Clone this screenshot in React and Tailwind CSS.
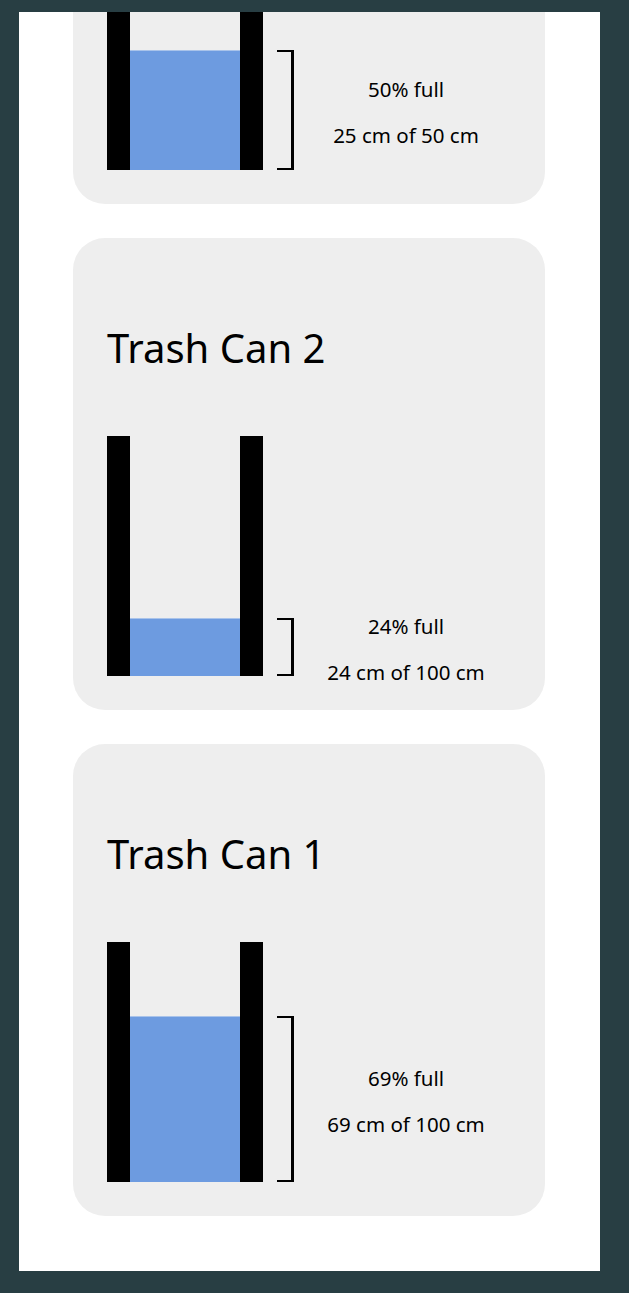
import React from 'react';

const cans = [
  { name: 'Trash Can 3', level: 25, depth: 50 },
  { name: 'Trash Can 2', level: 24, depth: 100 },
  { name: 'Trash Can 1', level: 69, depth: 100 },
];

const CAN_HEIGHT = 240;

const TrashCard = ({ can }) => {
  const pct = Math.round((can.level / can.depth) * 100);
  const fill = (CAN_HEIGHT * pct) / 100;

  return (
    <div className="bg-[#eeeeee] rounded-[32px] w-[472px] h-[472px] px-[34px] pt-[34px] flex flex-col">
      <h2 className="mt-[52px] text-[40px] leading-[48px] text-black font-normal">{can.name}</h2>
      <div className="mt-[64px] flex flex-row items-end">
        {/* the can itself */}
        <div className="flex flex-row h-[240px] w-[156px]">
          <div className="w-[23px] bg-black" />
          <div className="flex-1 flex flex-col justify-end">
            <div className="bg-[#6d9be0] border-t border-[#a9c3ea]" style={{ height: fill }} />
          </div>
          <div className="w-[23px] bg-black" />
        </div>
        {/* bracket + readout */}
        <div className="flex flex-row flex-1" style={{ height: fill }}>
          <div className="ml-[14px] w-[17px] border-y-2 border-r-[3px] border-black" />
          <div className="flex-1 pl-[7px] pt-[4px] flex flex-col items-center justify-center gap-[20px] text-[20.5px] leading-[26px] text-black">
            <p className="whitespace-nowrap">{pct}% full</p>
            <p className="whitespace-nowrap">
              {can.level} cm of {can.depth} cm
            </p>
          </div>
        </div>
      </div>
    </div>
  );
};

export default function App() {
  return (
    <div
      className="w-[629px] h-[1293px] bg-[#283e43] pl-[19px] pr-[29px] pt-[12px] pb-[22px]"
      style={{ fontFamily: '"Noto Sans", "Open Sans", sans-serif' }}
    >
      <div className="bg-white h-full overflow-hidden">
        <div className="-mt-[280px] flex flex-col items-start pl-[54px] gap-[34px]">
          {cans.map((can) => (
            <TrashCard key={can.name} can={can} />
          ))}
        </div>
      </div>
    </div>
  );
}
